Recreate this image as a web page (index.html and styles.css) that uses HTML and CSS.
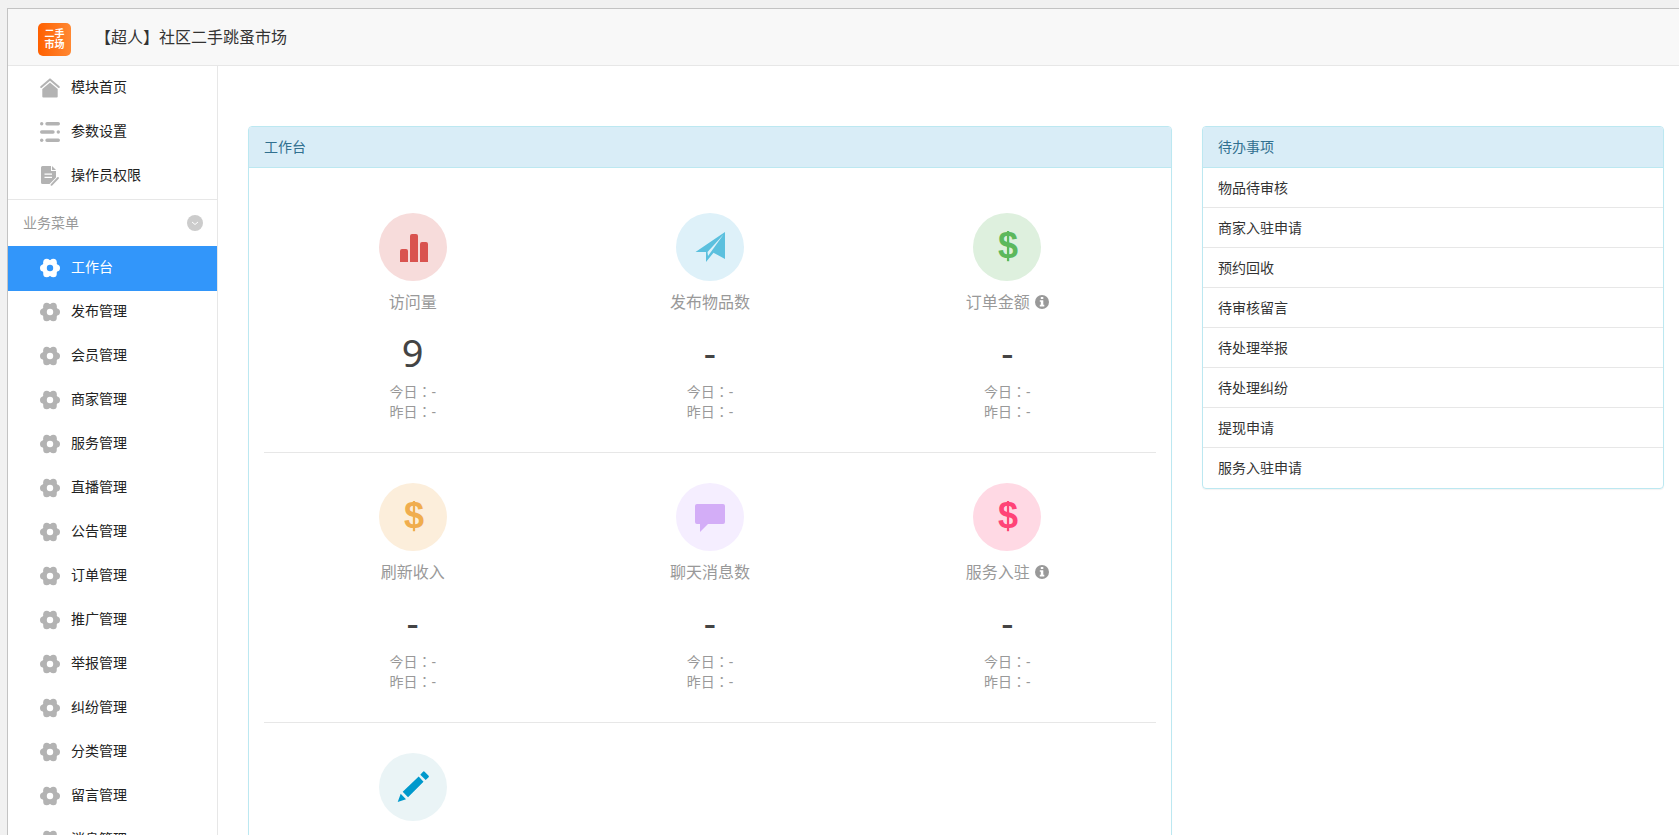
FILE: index.html
```html
<!DOCTYPE html>
<html lang="zh-CN">
<head>
    <meta charset="UTF-8">
    <meta name="viewport" content="width=device-width, initial-scale=1.0">
    <title>【超人】社区二手跳蚤市场</title>
    <link rel="stylesheet" href="styles.css">
</head>
<body>

<!-- Shared icons -->
<svg class="sprite" aria-hidden="true">
    <symbol id="icon-gear" viewBox="0 0 20 20">
        <mask id="gear-hole">
            <rect width="20" height="20" fill="#fff"/>
            <circle cx="10" cy="10" r="3.2" fill="#000"/>
        </mask>
        <g mask="url(#gear-hole)">
            <circle cx="10" cy="10" r="8.1"/>
            <circle cx="3.6" cy="10" r="3.6"/>
            <circle cx="16.4" cy="10" r="3.6"/>
            <circle cx="6.7" cy="4.2" r="3.5"/>
            <circle cx="13.3" cy="4.2" r="3.5"/>
            <circle cx="6.7" cy="15.8" r="3.5"/>
            <circle cx="13.3" cy="15.8" r="3.5"/>
        </g>
    </symbol>
    <symbol id="icon-info" viewBox="0 0 14 14">
        <circle cx="7" cy="7" r="7"/>
        <path fill="#fff" d="M5.8 2h2.5v2H5.8zM4.8 5.2h3.5v4.6h1V11.4H4.8V9.8h1V6.8h-1z"/>
    </symbol>
</svg>

<div class="frame">
    <header class="header">
        <div class="logo"><span>二手</span><span>市场</span></div>
        <h1 class="title">【超人】社区二手跳蚤市场</h1>
    </header>

    <div class="main">
        <!-- Sidebar -->
        <nav class="sidebar">
            <div class="menu">
                <a class="menu-item" href="#">
                    <svg class="menu-icon" viewBox="0 0 20 20"><path d="M2.3 11L10 4.4l7.7 6.6v7.6a1 1 0 0 1-1 1H3.3a1 1 0 0 1-1-1z"/><path fill="none" stroke="currentColor" stroke-width="2" stroke-linecap="round" stroke-linejoin="round" d="M1.2 9L10 1.4 18.8 9"/></svg>
                    <span>模块首页</span>
                </a>
                <a class="menu-item" href="#">
                    <svg class="menu-icon" viewBox="0 0 20 20"><path fill="none" stroke="currentColor" stroke-width="3.4" stroke-linecap="round" d="M7 1.7h11.3M1.7 10H13M7 18.3h11.3"/><circle cx="1.7" cy="1.7" r="1.7"/><circle cx="18.3" cy="10" r="1.7"/><circle cx="1.7" cy="18.3" r="1.7"/></svg>
                    <span>参数设置</span>
                </a>
                <a class="menu-item" href="#">
                    <svg class="menu-icon" viewBox="0 0 20 20"><path d="M2.5 0H11v5h5v6.5L9.5 18h-7A1.5 1.5 0 0 1 1 16.5v-15A1.5 1.5 0 0 1 2.5 0z"/><path d="M12 0l4 4h-4z"/><path fill="none" stroke="#fff" stroke-width="1.3" d="M4.5 8.2H12M4.5 11.3H12"/><path fill="none" stroke="currentColor" stroke-width="1.9" stroke-linecap="round" d="M11.5 18.8L18 12"/></svg>
                    <span>操作员权限</span>
                </a>
            </div>
            <div class="menu-title">
                业务菜单
                <button class="menu-toggle" aria-label="收起">
                    <svg viewBox="0 0 16 16" width="16" height="16"><path fill="none" stroke="#fff" d="M5 7l3 2.5L11 7"/></svg>
                </button>
            </div>
            <div class="menu">
                <a class="menu-item active" href="#"><svg class="menu-icon"><use href="#icon-gear"/></svg><span>工作台</span></a>
                <a class="menu-item" href="#"><svg class="menu-icon"><use href="#icon-gear"/></svg><span>发布管理</span></a>
                <a class="menu-item" href="#"><svg class="menu-icon"><use href="#icon-gear"/></svg><span>会员管理</span></a>
                <a class="menu-item" href="#"><svg class="menu-icon"><use href="#icon-gear"/></svg><span>商家管理</span></a>
                <a class="menu-item" href="#"><svg class="menu-icon"><use href="#icon-gear"/></svg><span>服务管理</span></a>
                <a class="menu-item" href="#"><svg class="menu-icon"><use href="#icon-gear"/></svg><span>直播管理</span></a>
                <a class="menu-item" href="#"><svg class="menu-icon"><use href="#icon-gear"/></svg><span>公告管理</span></a>
                <a class="menu-item" href="#"><svg class="menu-icon"><use href="#icon-gear"/></svg><span>订单管理</span></a>
                <a class="menu-item" href="#"><svg class="menu-icon"><use href="#icon-gear"/></svg><span>推广管理</span></a>
                <a class="menu-item" href="#"><svg class="menu-icon"><use href="#icon-gear"/></svg><span>举报管理</span></a>
                <a class="menu-item" href="#"><svg class="menu-icon"><use href="#icon-gear"/></svg><span>纠纷管理</span></a>
                <a class="menu-item" href="#"><svg class="menu-icon"><use href="#icon-gear"/></svg><span>分类管理</span></a>
                <a class="menu-item" href="#"><svg class="menu-icon"><use href="#icon-gear"/></svg><span>留言管理</span></a>
                <a class="menu-item" href="#"><svg class="menu-icon"><use href="#icon-gear"/></svg><span>消息管理</span></a>
            </div>
        </nav>

        <!-- Content -->
        <main class="content">
            <section class="panel">
                <h2 class="panel-heading">工作台</h2>
                <div class="panel-body">
                    <div class="stats-row">
                        <div class="stat">
                            <svg class="stat-icon visits" viewBox="0 0 68 68"><path d="M21 49V38a2 2 0 0 1 2-2h4a2 2 0 0 1 2 2v11zM31 49V23a2 2 0 0 1 2-2h4a2 2 0 0 1 2 2v26zM41 49V31a2 2 0 0 1 2-2h4a2 2 0 0 1 2 2v18z"/></svg>
                            <div class="stat-label">访问量</div>
                            <div class="stat-number">9</div>
                            <div class="stat-day" lang="zh-TW">今日：-</div>
                            <div class="stat-day" lang="zh-TW">昨日：-</div>
                        </div>
                        <div class="stat">
                            <svg class="stat-icon posts" viewBox="0 0 68 68"><path d="M19.5 39L49 19v27l-11.5-6.3L30 49V39z"/><path class="fold" d="M31.5 39l16-17.5L32 43z"/></svg>
                            <div class="stat-label">发布物品数</div>
                            <div class="stat-number">-</div>
                            <div class="stat-day" lang="zh-TW">今日：-</div>
                            <div class="stat-day" lang="zh-TW">昨日：-</div>
                        </div>
                        <div class="stat">
                            <svg class="stat-icon orders" viewBox="0 0 68 68"><text x="35" y="45">$</text><rect x="34" y="18" width="2" height="30"/></svg>
                            <div class="stat-label">订单金额<svg class="info"><use href="#icon-info"/></svg></div>
                            <div class="stat-number">-</div>
                            <div class="stat-day" lang="zh-TW">今日：-</div>
                            <div class="stat-day" lang="zh-TW">昨日：-</div>
                        </div>
                    </div>
                    <div class="stats-row">
                        <div class="stat">
                            <svg class="stat-icon refresh" viewBox="0 0 68 68"><text x="35" y="45">$</text><rect x="34" y="18" width="2" height="30"/></svg>
                            <div class="stat-label">刷新收入</div>
                            <div class="stat-number">-</div>
                            <div class="stat-day" lang="zh-TW">今日：-</div>
                            <div class="stat-day" lang="zh-TW">昨日：-</div>
                        </div>
                        <div class="stat">
                            <svg class="stat-icon chat" viewBox="0 0 68 68"><path d="M21 21h26a2 2 0 0 1 2 2v16a2 2 0 0 1-2 2H32l-8 8v-8h-3a2 2 0 0 1-2-2V23a2 2 0 0 1 2-2z"/></svg>
                            <div class="stat-label">聊天消息数</div>
                            <div class="stat-number">-</div>
                            <div class="stat-day" lang="zh-TW">今日：-</div>
                            <div class="stat-day" lang="zh-TW">昨日：-</div>
                        </div>
                        <div class="stat">
                            <svg class="stat-icon service" viewBox="0 0 68 68"><text x="35" y="45">$</text><rect x="34" y="18" width="2" height="30"/></svg>
                            <div class="stat-label">服务入驻<svg class="info"><use href="#icon-info"/></svg></div>
                            <div class="stat-number">-</div>
                            <div class="stat-day" lang="zh-TW">今日：-</div>
                            <div class="stat-day" lang="zh-TW">昨日：-</div>
                        </div>
                    </div>
                    <div class="stats-row">
                        <div class="stat">
                            <svg class="stat-icon edit" viewBox="0 0 68 68"><path d="M18.7 49l3-8.3 5.3 5.6zM23.7 38.7l16-15.2 4.8 5.3L29 44.3zM41.3 21.7l2.7-3a1.2 1.2 0 0 1 1.6 0l4 4a1.2 1.2 0 0 1 0 1.6l-2.9 2.7z"/></svg>
                        </div>
                    </div>
                </div>
            </section>

            <section class="panel">
                <h2 class="panel-heading">待办事项</h2>
                <ul class="todo-list">
                    <li><a href="#">物品待审核</a></li>
                    <li><a href="#">商家入驻申请</a></li>
                    <li><a href="#">预约回收</a></li>
                    <li><a href="#">待审核留言</a></li>
                    <li><a href="#">待处理举报</a></li>
                    <li><a href="#">待处理纠纷</a></li>
                    <li><a href="#">提现申请</a></li>
                    <li><a href="#">服务入驻申请</a></li>
                </ul>
            </section>
        </main>
    </div>
</div>

</body>
</html>
```

FILE: styles.css
```css
* {
    box-sizing: border-box;
}

body {
    margin: 0;
    padding: 8px 0 0 7px;
    height: 100vh;
    overflow: hidden;
    background-color: #f1f1f1;
    color: #333;
    font-family: "Noto Sans", "Noto Sans CJK SC", sans-serif;
    font-size: 14px;
    line-height: 20px;
}

a {
    color: inherit;
    text-decoration: none;
}

.sprite {
    position: absolute;
    width: 0;
    height: 0;
}

.frame {
    border-top: 1px solid #c3c3c3;
    border-left: 1px solid #c3c3c3;
    background-color: #fff;
}

/* Header */
.header {
    display: flex;
    align-items: center;
    gap: 24px;
    height: 57px;
    padding-left: 30px;
    background-color: #f8f8f8;
    border-bottom: 1px solid #e7e7e7;
}

.logo {
    display: flex;
    flex-direction: column;
    align-items: center;
    justify-content: center;
    width: 33px;
    height: 33px;
    margin-top: 4px;
    border-radius: 5px;
    background: linear-gradient(90deg, #ff6000, #ff8833);
    color: #fff;
    font-size: 10px;
    font-weight: bold;
    line-height: 11px;
}

.title {
    margin: 0;
    font-size: 16px;
    font-weight: normal;
}

.main {
    display: flex;
}

/* Sidebar */
.sidebar {
    flex: none;
    width: 210px;
    border-right: 1px solid #e7e7e7;
    color: #222;
}

.menu {
    padding-bottom: 1px;
}

.menu-item {
    display: flex;
    align-items: center;
    gap: 11px;
    height: 44px;
    padding-left: 32px;
}

.menu-item span {
    padding-bottom: 2px;
}

.menu-icon {
    width: 20px;
    height: 20px;
    color: #b3b3b3;
    fill: currentColor;
    overflow: visible;
}

.menu-item.active {
    background-color: #3296fa;
    box-shadow: 0 1px #3296fa;
    color: #fff;
}

.menu-item.active .menu-icon {
    color: #fff;
}

.menu-title {
    display: flex;
    align-items: center;
    justify-content: space-between;
    height: 47px;
    padding: 0 14px 0 15px;
    border-top: 1px solid #e7e7e7;
    color: #999;
}

.menu-toggle {
    width: 16px;
    height: 16px;
    padding: 0;
    border: none;
    border-radius: 50%;
    background-color: #ccc;
    cursor: pointer;
}

.menu-toggle svg {
    display: block;
}

/* Panels */
.content {
    flex: 1;
    display: grid;
    grid-template-columns: 2fr 1fr;
    align-items: start;
    gap: 30px;
    padding: 60px 15px 0 30px;
}

.panel {
    border: 1px solid #bce8f1;
    border-radius: 4px;
    box-shadow: 0 1px 1px rgba(0, 0, 0, 0.05);
    overflow: hidden;
}

.panel-heading {
    margin: 0;
    padding: 10px 15px;
    border-bottom: 1px solid #bce8f1;
    background-color: #d9edf7;
    color: #31708f;
    font-size: 14px;
    font-weight: normal;
}

.panel-body {
    padding: 15px;
}

/* Statistics */
.stats-row {
    display: grid;
    grid-template-columns: repeat(3, 1fr);
    min-height: 270px;
    padding: 30px 0;
    border-bottom: 1px solid #e7e7e7;
}

.stat {
    text-align: center;
    color: #999;
}

.stat-icon {
    display: block;
    width: 68px;
    height: 68px;
    margin: 0 auto 10px;
    border-radius: 50%;
}

.stat-icon text {
    font-family: "Liberation Sans", Arial, sans-serif;
    font-size: 36px;
    font-weight: bold;
    text-anchor: middle;
}

.visits {
    background-color: #f7dcdb;
    fill: #d9534f;
}

.posts {
    background-color: #def1f9;
    fill: #5bc0de;
}

.posts .fold {
    fill: #def1f9;
}

.orders {
    background-color: #def0de;
    fill: #5cb85c;
}

.refresh {
    background-color: #fceedb;
    fill: #f0ad4e;
}

.chat {
    background-color: #f5eeff;
    fill: #d3adf7;
}

.service {
    background-color: #ffd9e4;
    fill: #ff4477;
}

.edit {
    background-color: #eaf4f6;
    fill: #0099cc;
}

.stat-label {
    display: flex;
    align-items: center;
    justify-content: center;
    gap: 5px;
    font-size: 16px;
    line-height: 22px;
}

.info {
    width: 14px;
    height: 14px;
    fill: #999;
}

.stat-number {
    margin: 15px 0 6px;
    color: #444;
    font-size: 38px;
    line-height: 48px;
}

.stat-day {
    font-family: "Noto Sans", "Noto Sans CJK TC", sans-serif;
}

/* Todo list */
.todo-list {
    margin: 0;
    padding: 0;
    list-style: none;
}

.todo-list li {
    height: 40px;
    padding: 10px 15px 9px;
    border-bottom: 1px solid #e7e7e7;
}

.todo-list li:last-child {
    border-bottom: none;
}
```
